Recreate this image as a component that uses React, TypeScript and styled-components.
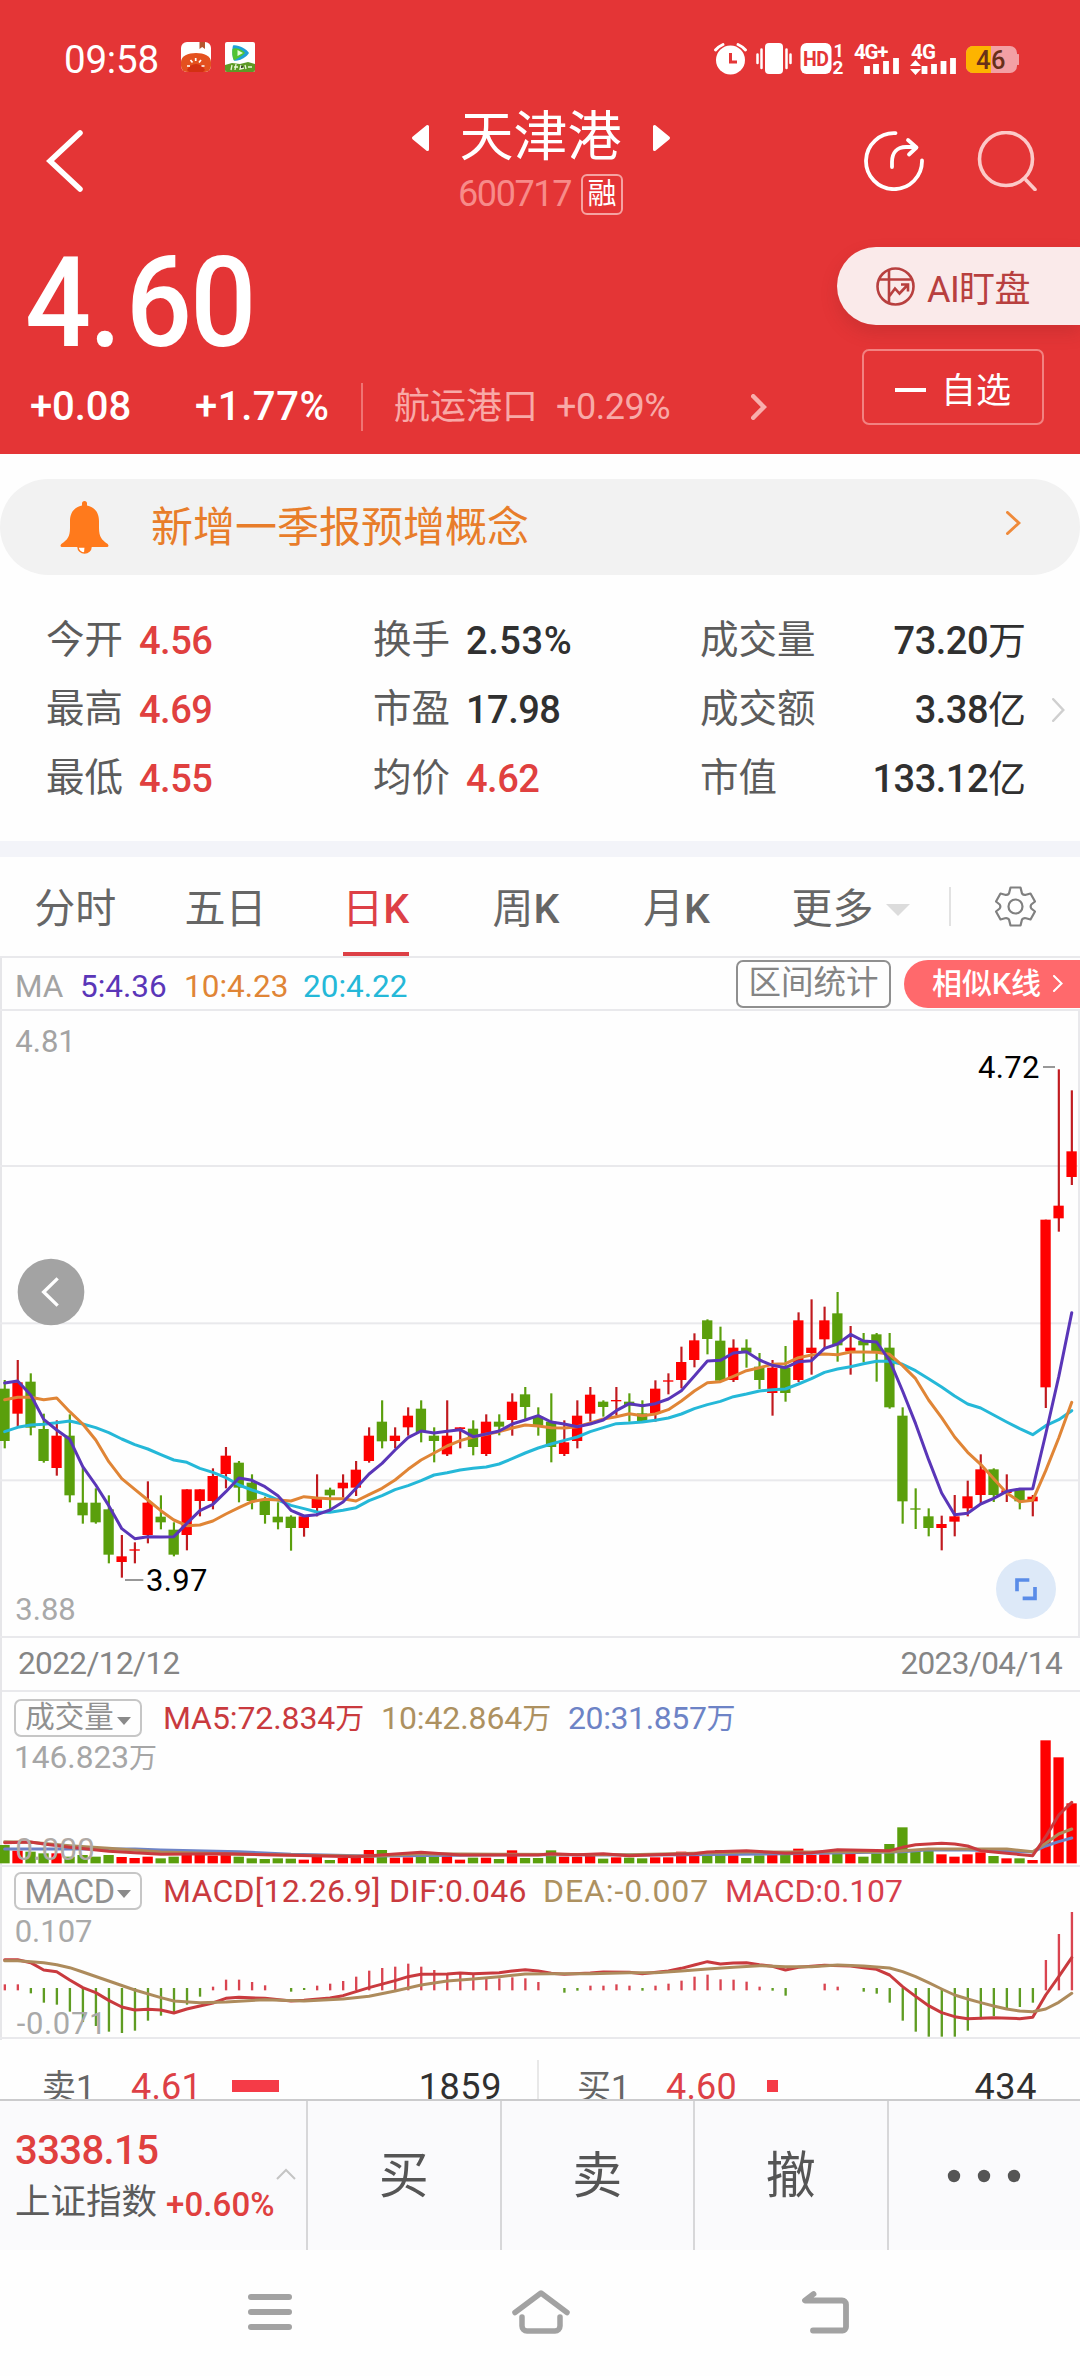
import React from "react";
import styled, { createGlobalStyle, css } from "styled-components";

const RED = "#e43536";
const UP = "#e0403f";
const K_RED = "#fe0000";
const K_GREEN = "#5a9f0c";
const PURPLE = "#5a36b8";
const ORANGE = "#e08536";
const CYAN = "#25b8d8";
const LINE = "#e9e9ec";

const Global = createGlobalStyle`
  * { box-sizing: border-box; }
  body {
    margin: 0;
    background: #fff;
    font-family: Roboto, "Noto Sans CJK SC", sans-serif;
    line-height: 1;
  }
  svg { display: block; flex: none; }
`;

const Screen = styled.div`
  width: 1080px;
  height: 2376px;
  display: flex;
  flex-direction: column;
  overflow: hidden;
  background: #fefefe;
  white-space: nowrap;
`;

/* ---------- header ---------- */

const Header = styled.header`
  height: 454px;
  background: ${RED};
  color: #fff;
`;

const StatusBar = styled.div`
  height: 90px;
  padding: 30px 61px 0 64px;
  display: flex;
  align-items: center;
`;

const Clock = styled.span`
  width: 117px;
  font-size: 38.5px;
  letter-spacing: -0.2px;
`;

const AppIcons = styled.div`
  display: flex;
  gap: 14px;
  margin-top: -6px;
`;

const SystemIcons = styled.div`
  margin-left: auto;
  margin-top: -4px;
`;

const NavBar = styled.div`
  height: 142px;
  padding: 0 43px 0 46px;
  display: grid;
  grid-template-columns: 1fr auto 1fr;
  align-items: center;
`;

const TitleBlock = styled.div`
  padding-top: 3px;
  display: flex;
  flex-direction: column;
  align-items: center;
  gap: 9px;
  margin-right: 2px;
`;

const TitleRow = styled.div`
  height: 54px;
  display: flex;
  align-items: center;
  gap: 30px;
`;

const Title = styled.h1`
  margin: 0;
  font-size: 54px;
  line-height: 60px;
  font-weight: 400;
`;

const CodeRow = styled.div`
  height: 41px;
  display: flex;
  align-items: center;
  gap: 10px;
  font-size: 36px;
  letter-spacing: -1.4px;
  color: #f78b89;
`;

const Badge = styled.span`
  width: 42px;
  height: 41px;
  display: grid;
  place-items: center;
  border: 2px solid #f5a3a2;
  border-radius: 6px;
  font-size: 29px;
  letter-spacing: 0;
  color: #fff;
`;

const NavActions = styled.div`
  display: flex;
  justify-content: flex-end;
  gap: 53px;
`;

const Quote = styled.div`
  height: 222px;
  display: flex;
  justify-content: space-between;
`;

const QuoteMain = styled.div`
  padding: 18px 0 0 25px;
`;

const Price = styled.div`
  height: 104px;
  line-height: 106px;
  font-size: 127px;
  font-weight: 500;
  letter-spacing: -2px;
  transform: scaleX(0.915);
  transform-origin: left center;
  i { font-style: normal; letter-spacing: 5px; }
`;

const ChangeRow = styled.div`
  margin-top: 23px;
  height: 60px;
  padding-left: 5px;
  display: flex;
  align-items: center;
`;

const Change = styled.span<{ $width: number; $spacing: number }>`
  width: ${(p) => p.$width}px;
  font-size: 40px;
  font-weight: 500;
  letter-spacing: ${(p) => p.$spacing}px;
`;

const Sector = styled.div`
  height: 48px;
  padding-left: 31px;
  width: 406px;
  display: flex;
  align-items: center;
  border-left: 2px solid #f07473;
  color: #f8a9a7;
  font-size: 36px;
  svg { margin-left: auto; }
`;

const SectorChange = styled.span`
  margin-left: 18px;
  letter-spacing: -0.5px;
`;

const QuoteSide = styled.div`
  padding-top: 15px;
  display: flex;
  flex-direction: column;
  align-items: flex-end;
  gap: 24px;
`;

const AiPill = styled.button`
  width: 243px;
  height: 78px;
  padding: 0 0 0 39px;
  display: flex;
  align-items: center;
  gap: 12px;
  border: 0;
  border-radius: 39px 0 0 39px;
  background: #faeaea;
  box-shadow: 0 8px 16px rgba(150, 40, 40, 0.28);
  font: 36px Roboto, "Noto Sans CJK SC", sans-serif;
  letter-spacing: -0.6px;
  color: #b8403f;
`;

const WatchButton = styled.button`
  width: 182px;
  height: 76px;
  margin-right: 36px;
  padding: 0;
  display: flex;
  align-items: center;
  justify-content: center;
  gap: 15px;
  border: 2px solid #f28281;
  border-radius: 7px;
  background: transparent;
  font: 35px Roboto, "Noto Sans CJK SC", sans-serif;
  color: #fff;
`;

const Dash = styled.span`
  width: 31px;
  height: 4px;
  margin-top: 5px;
  background: #fff;
`;

/* ---------- notice + stats ---------- */

const Notice = styled.div`
  height: 96px;
  margin-top: 25px;
  padding: 0 59px 0 60px;
  display: flex;
  align-items: center;
  border-radius: 48px;
  background: #f2f2f2;
  color: #e87d2a;
  font-size: 42px;
  > svg:last-child { margin-top: -8px; }
`;

const NoticeText = styled.span`
  margin: 2px auto 0 42px;
`;

const StatsArea = styled.div`
  height: 266px;
  padding: 31px 15px 0 46px;
  display: flex;
  align-items: flex-start;
`;

const Stats = styled.div`
  display: grid;
  grid-template-columns: 327px 327px 326px;
  grid-auto-rows: 69px;
`;

const Stat = styled.div<{ $spread?: boolean }>`
  display: flex;
  align-items: center;
  font-size: 38.5px;
  gap: 16px;
  ${(p) => p.$spread && css`justify-content: space-between;`}
`;

const StatLabel = styled.span`
  color: #5c5c5c;
`;

const StatValue = styled.span<{ $up?: boolean; $spacing: number }>`
  color: ${(p) => (p.$up ? UP : "#303030")};
  font-weight: 500;
  font-size: 38px;
  letter-spacing: ${(p) => p.$spacing}px;
  em { font-style: normal; font-weight: 400; letter-spacing: 0; }
`;

const StatsArrow = styled.div`
  height: 207px;
  margin-left: 26px;
  display: flex;
  align-items: center;
`;

const Band = styled.div`
  height: 16px;
  background: #f3f4f9;
`;

/* ---------- tabs ---------- */

const Tabs = styled.nav`
  height: 101px;
  display: flex;
  align-items: stretch;
  border-bottom: 2px solid ${LINE};
  color: #666;
  font-size: 41px;
`;

const Tab = styled.div<{ $active?: boolean }>`
  width: 150.3px;
  padding-top: 6px;
  display: flex;
  align-items: center;
  justify-content: center;
  color: ${(p) => (p.$active ? "#dd4046" : "inherit")};
  background: ${(p) =>
    p.$active ? "linear-gradient(#dd4046, #dd4046) center bottom / 66px 4px no-repeat" : "none"};
  b { font-weight: 500; }
`;

const MoreTab = styled.div`
  padding: 6px 0 0 40px;
  width: 198px;
  display: flex;
  align-items: center;
  gap: 13px;
`;

const TabTools = styled.div`
  flex: 1;
  margin: 30px 0;
  padding-left: 44px;
  display: flex;
  align-items: center;
  border-left: 2px solid #e2e2e2;
`;

/* ---------- charts ---------- */

const Framed = styled.section`
  border-left: 2px solid #e6e6e9;
  svg { margin-left: -2px; }
`;

const MaBar = styled.div`
  height: 51px;
  padding-left: 13px;
  display: flex;
  align-items: center;
  font-size: 31.5px;
  background: #fefefe;
`;

const MaValue = styled.span<{ $color: string; $width: number }>`
  width: ${(p) => p.$width}px;
  padding-top: 6px;
  color: ${(p) => p.$color};
`;

const RangeButton = styled.span`
  width: 155px;
  height: 48px;
  margin-left: auto;
  display: grid;
  place-items: center;
  border: 2px solid #8f8f8f;
  border-radius: 7px;
  font-size: 32.5px;
  color: #848484;
`;

const SimilarButton = styled.span`
  width: 176px;
  height: 48px;
  margin-left: 13px;
  padding-left: 28px;
  display: flex;
  align-items: center;
  gap: 12px;
  border-radius: 24px 0 0 24px;
  background: #ff696c;
  font-size: 30px;
  font-weight: 500;
  color: #fff;
  svg { margin-left: 0; }
`;

const DateRow = styled.div`
  height: 54px;
  padding: 0 18px 0 16px;
  display: flex;
  align-items: center;
  justify-content: space-between;
  border-bottom: 2px solid ${LINE};
  font-size: 31.5px;
  letter-spacing: -0.6px;
  color: #858585;
`;

const IndicatorHead = styled.div<{ $height: number }>`
  height: ${(p) => p.$height}px;
  padding: 0 0 1px 12px;
  display: flex;
  align-items: flex-end;
`;

const IndicatorPicker = styled.span`
  width: 128px;
  height: 38px;
  margin-right: 21px;
  display: flex;
  align-items: center;
  justify-content: center;
  gap: 3px;
  border: 2px solid #c6c6c6;
  border-radius: 7px;
  font-size: 29.5px;
  color: #919191;
  svg { margin: 5px 0 0; }
`;

const PickerLatin = styled.span`
  font-size: 32.5px;
  letter-spacing: -0.6px;
  padding-top: 2px;
`;

const IndicatorValue = styled.span<{ $color: string; $width: number; $spacing?: number }>`
  width: ${(p) => p.$width}px;
  height: 37px;
  line-height: 37px;
  font-size: 32px;
  letter-spacing: ${(p) => p.$spacing ?? -0.1}px;
  color: ${(p) => p.$color};
  em { font-style: normal; font-size: 29px; }
`;

/* ---------- order book, action bar, system nav ---------- */

const OrderBook = styled.div`
  height: 59px;
  overflow: hidden;
  display: flex;
`;

const OrderSide = styled.div<{ $pad: string; $divided?: boolean }>`
  flex: 1;
  height: 59px;
  padding: ${(p) => p.$pad};
  display: flex;
  align-items: flex-start;
  font-size: 36px;
  line-height: 40px;
  ${(p) =>
    p.$divided && css`background: linear-gradient(#e8e8e8, #e8e8e8) right 20px / 2px 39px no-repeat;`}
`;

const OrderName = styled.span`
  width: 89px;
  font-size: 34px;
  color: #666;
`;

const OrderPrice = styled.span`
  width: 101px;
  letter-spacing: 0.2px;
  color: #dd4046;
`;

const OrderBar = styled.span<{ $width: number }>`
  width: ${(p) => p.$width}px;
  height: 12px;
  margin-top: 13px;
  background: #f53b47;
`;

const OrderCount = styled.span`
  margin-left: auto;
  letter-spacing: 0.6px;
  color: #303030;
`;

const ActionBar = styled.div`
  height: 151px;
  display: grid;
  grid-template-columns: 306px repeat(4, 193.5px);
  border-top: 2px solid #cbcbcd;
  background: #fafafc;
`;

const IndexCell = styled.div`
  padding: 30px 9px 0 15px;
  position: relative;
`;

const IndexPrice = styled.div`
  height: 40px;
  line-height: 40px;
  font-size: 40px;
  font-weight: 500;
  letter-spacing: -0.6px;
  color: ${UP};
`;

const IndexRow = styled.div`
  margin-top: 12px;
  height: 40px;
  display: flex;
  align-items: center;
  gap: 9px;
  font-size: 35.5px;
  color: #5c5c5c;
`;

const IndexChange = styled.span`
  margin-top: 2px;
  font-size: 33px;
  font-weight: 500;
  letter-spacing: 0.1px;
  color: ${UP};
`;

const IndexCaret = styled.div`
  position: absolute;
  right: 10px;
  top: 67px;
`;

const Action = styled.div`
  display: flex;
  align-items: center;
  justify-content: center;
  border-left: 2px solid #d7d7d9;
  font-size: 50px;
  line-height: 60px;
  padding-top: 1px;
  color: #555;
`;

const SystemNav = styled.div`
  height: 126px;
  padding: 0 230px 2px 247px;
  display: flex;
  align-items: center;
  justify-content: space-between;
`;

/* ---------- chart data ---------- */

type Candle = [dir: 0 | 1, high: number, top: number, bottom: number, low: number];

const candles: Candle[] = [
  [0, 420, 446, 603, 625], [1, 360, 427, 521, 560], [0, 400, 425, 563, 586], [0, 521, 567, 663, 668],
  [1, 541, 587, 684, 707], [0, 523, 587, 766, 787], [0, 682, 788, 826, 851], [0, 745, 788, 847, 851],
  [0, 766, 808, 944, 970], [1, 885, 949, 966, 1013], [1, 907, 928, 932, 970], [1, 724, 788, 885, 910],
  [0, 766, 830, 847, 868], [0, 847, 869, 944, 949], [1, 748, 748, 885, 931], [1, 748, 748, 783, 829],
  [1, 685, 708, 783, 808], [1, 621, 647, 702, 745], [0, 663, 668, 743, 787], [0, 703, 728, 783, 808],
  [0, 770, 780, 825, 851], [0, 787, 830, 847, 868], [0, 826, 830, 864, 932], [1, 829, 829, 864, 890],
  [1, 703, 775, 804, 829], [0, 743, 749, 766, 808], [1, 703, 728, 745, 773], [1, 663, 689, 743, 768],
  [1, 562, 587, 663, 668], [0, 481, 545, 604, 625], [1, 562, 587, 603, 625], [1, 502, 527, 562, 587],
  [0, 481, 506, 576, 607], [0, 562, 587, 603, 667], [1, 481, 587, 643, 648], [1, 562, 562, 567, 625],
  [0, 541, 566, 621, 646], [1, 523, 545, 642, 648], [0, 523, 545, 560, 586], [1, 460, 485, 540, 587],
  [0, 441, 463, 501, 540], [0, 502, 530, 556, 587], [0, 460, 545, 621, 667], [1, 541, 607, 642, 648],
  [1, 481, 527, 603, 625], [1, 441, 464, 521, 545], [0, 481, 485, 501, 530], [1, 441, 480, 484, 527],
  [0, 460, 485, 497, 545], [0, 481, 520, 545, 549], [1, 421, 446, 521, 545], [1, 400, 421, 425, 463],
  [1, 320, 366, 420, 445], [1, 280, 301, 360, 382], [0, 238, 241, 297, 343], [0, 260, 302, 422, 424],
  [1, 298, 323, 420, 426], [0, 298, 323, 338, 383], [0, 339, 380, 420, 447], [1, 360, 383, 459, 527],
  [0, 318, 383, 459, 485], [1, 217, 241, 420, 426], [1, 178, 323, 339, 404], [1, 200, 241, 298, 325],
  [0, 156, 220, 316, 365], [1, 258, 323, 334, 404], [0, 279, 302, 316, 367], [0, 279, 283, 337, 425],
  [0, 279, 323, 502, 506], [0, 502, 527, 784, 851], [0, 745, 805, 809, 867], [0, 805, 829, 864, 889],
  [1, 827, 852, 864, 931], [1, 765, 829, 845, 889], [1, 722, 769, 805, 829], [1, 643, 688, 765, 792],
  [0, 685, 688, 765, 786], [1, 703, 751, 759, 786], [0, 745, 749, 784, 808], [1, 765, 770, 784, 829],
  [1, -61, -61, 442, 504], [1, -512, -103, -65, -25], [1, -449, -266, -189, -165],
];

const ma5 = [
  429, 423, 465, 538, 570, 598, 680, 735, 797, 866, 896, 890, 891, 890, 850, 812, 793, 755, 714, 721, 740, 767, 811,
  828, 824, 810, 786, 745, 702, 670, 630, 593, 573, 579, 574, 569, 590, 582, 573, 552, 540, 527, 546, 552, 560, 552,
  540, 512, 491, 497, 491, 477, 452, 408, 363, 361, 339, 335, 360, 376, 383, 365, 362, 325, 312, 283, 303, 306, 361,
  453, 551, 659, 759, 824, 820, 792, 775, 754, 747, 746, 582, 410, 218,
];

const ma10 = [
  479, 472, 472, 479, 474, 515, 552, 600, 665, 716, 748, 780, 812, 840, 857, 855, 843, 822, 803, 785, 778, 780, 783,
  770, 774, 776, 776, 783, 764, 745, 720, 688, 660, 639, 618, 602, 591, 583, 575, 564, 555, 558, 563, 564, 560, 549,
  537, 530, 521, 527, 522, 509, 483, 453, 428, 425, 409, 392, 383, 373, 371, 353, 345, 342, 344, 336, 336, 337, 343,
  377, 416, 480, 533, 591, 637, 673, 716, 759, 785, 781, 692, 594, 487,
];

const ma20 = [
  575, 562, 555, 553, 548, 543, 552, 563, 578, 597, 614, 627, 644, 660, 667, 685, 697, 713, 735, 750, 763, 780, 796,
  806, 816, 817, 811, 803, 782, 767, 749, 737, 722, 705, 698, 690, 685, 681, 672, 656, 639, 624, 612, 601, 591, 575,
  563, 551, 549, 546, 541, 534, 522, 506, 494, 484, 470, 462, 453, 449, 447, 432, 416, 397, 387, 380, 371, 364, 364,
  373, 392, 416, 441, 468, 492, 504, 525, 546, 566, 584, 557, 539, 512,
];

const volumeTops = [
  615, 632, 635, 640, 640, 650, 645, 650, 645, 651, 654, 650, 655, 650, 645, 645, 647, 645, 650, 655, 657, 655, 656,
  659, 647, 660, 654, 654, 630, 630, 653, 652, 648, 650, 648, 659, 653, 653, 657, 631, 654, 654, 631, 650, 650, 648,
  656, 652, 653, 655, 652, 652, 635, 648, 648, 630, 645, 654, 646, 645, 643, 626, 645, 643, 630, 640, 650, 640, 612,
  562, 628, 630, 643, 650, 643, 637, 648, 655, 655, 660, 301, 352, 490,
];

type Knots = [number, number][];

const volMa5: Knots = [
  [0, 608], [2, 606], [3, 612], [5, 622], [8, 634], [12, 643], [17, 641], [22, 646], [27, 650], [30, 642], [32, 637],
  [35, 645], [41, 645], [42, 641], [44, 644], [46, 641], [48, 647], [50, 644], [53, 641], [54, 636], [57, 632],
  [60, 640], [62, 638], [64, 629], [68, 632], [69, 622], [70, 614], [72, 610], [73, 612], [74, 618], [75, 632],
  [77, 640], [79, 647], [80, 590], [81, 525], [82, 487],
];
const volMa10: Knots = [
  [0, 605], [2, 607], [5, 617], [8, 625], [12, 636], [18, 643], [23, 646], [28, 649], [32, 641], [38, 643], [48, 644],
  [57, 636], [68, 635], [71, 627], [77, 627], [79, 635], [80, 610], [81, 582], [82, 567],
];
const volMa20: Knots = [
  [0, 627], [10, 627], [12, 630], [18, 635], [22, 643], [28, 648], [40, 644], [50, 645], [60, 641], [69, 635],
  [71, 629], [74, 630], [79, 636], [80, 618], [81, 605], [82, 594],
];

const macdTips = [
  1033, 1033, 1060, 1088, 1094, 1115, 1146, 1158, 1175, 1179, 1172, 1142, 1127, 1120, 1094, 1070, 1040, 1019, 1019,
  1026, 1036, 0, 1055, 1050, 1037, 1031, 1023, 1010, 992, 984, 980, 971, 980, 990, 1000, 998, 1005, 1015, 1015, 1012,
  1015, 1026, 0, 1058, 1052, 1037, 1037, 1033, 1037, 1052, 1037, 1031, 1022, 1010, 1004, 1018, 1019, 1025, 1040, 1052,
  1067, 0, 0, 1031, 1040, 0, 1055, 1061, 1088, 1142, 1175, 1190, 1190, 1190, 1172, 1138, 1128, 1110, 1101, 1088, 960,
  882, 816,
];

const dif: Knots = [
  [0, 959], [1, 959], [2, 968], [3, 990], [4, 995], [5, 1020], [6, 1043], [7, 1058], [8, 1081], [9, 1101], [10, 1110],
  [11, 1108], [12, 1110], [13, 1119], [14, 1107], [15, 1098], [16, 1089], [17, 1075], [18, 1072], [20, 1075],
  [22, 1083], [23, 1081], [25, 1074], [26, 1067], [27, 1055], [28, 1043], [30, 1022], [31, 1010], [32, 1003],
  [34, 1002], [35, 999], [36, 1001], [38, 998], [39, 993], [40, 989], [41, 993], [42, 1000], [43, 1003], [45, 999],
  [46, 996], [48, 997], [49, 1001], [51, 993], [52, 985], [53, 975], [54, 965], [55, 972], [56, 969], [57, 968],
  [58, 974], [59, 979], [60, 990], [61, 982], [63, 976], [65, 978], [66, 983], [67, 988], [68, 1005], [69, 1040],
  [70, 1069], [71, 1097], [72, 1118], [73, 1130], [74, 1136], [76, 1133], [78, 1136], [79, 1132], [80, 1065],
  [81, 1010], [82, 953],
];
const dea: Knots = [
  [0, 962], [1, 962], [3, 968], [4, 974], [5, 983], [6, 996], [8, 1023], [10, 1050], [12, 1073], [13, 1083],
  [15, 1088], [17, 1086], [20, 1079], [23, 1083], [26, 1077], [28, 1069], [30, 1053], [32, 1035], [34, 1023],
  [36, 1017], [38, 1010], [40, 1002], [42, 1001], [45, 1001], [48, 998], [50, 998], [52, 993], [54, 987], [56, 982],
  [58, 977], [60, 980], [62, 980], [64, 975], [66, 978], [68, 984], [69, 995], [70, 1010], [71, 1028], [72, 1047],
  [73, 1065], [74, 1077], [75, 1088], [76, 1098], [77, 1107], [78, 1113], [79, 1115], [80, 1107], [81, 1087],
  [82, 1060],
];

const xAt = (i: number) => 14 + 39.04 * i;
const series = (values: number[]) => values.map((v, i) => `${xAt(i)},${v}`).join(" ");
const knots = (values: Knots) => values.map(([i, v]) => `${xAt(i)},${v}`).join(" ");

const Curve = ({ points, color, width = 9 }: { points: string; color: string; width?: number }) => (
  <polyline points={points} fill="none" stroke={color} strokeWidth={width} strokeLinejoin="round" strokeLinecap="round" />
);

function PriceChart() {
  return (
    <svg width="1080" height="629" viewBox="0 -693 3240 1887" fontFamily="Roboto" fontSize="93">
      {[-690, -222, 250, 721, 1191].map((y) => (
        <rect key={y} x="0" y={y - 3} width="3240" height="6" fill={LINE} />
      ))}
      <rect x="3234" y="-693" width="6" height="1887" fill={LINE} />
      <text x="46" y="-564" fill="#a3a3a3">4.81</text>
      <text x="46" y="1139" fill="#a9a9a9">3.88</text>
      {candles.map(([dir, high, top, bottom, low], i) => (
        <g key={i} fill={dir ? K_RED : K_GREEN}>
          <rect x={xAt(i) - 3} y={high} width="6.500" height={low - high} fill={dir ? "#c01a1f" : K_GREEN} />
          <rect x={xAt(i) - 16} y={top} width="31" height={bottom - top} />
        </g>
      ))}
      <Curve points={series(ma20)} color={CYAN} />
      <Curve points={series(ma10)} color={ORANGE} />
      <Curve points={series(ma5)} color={PURPLE} />
      <rect x="375" y="1018" width="55" height="4" fill="#666" />
      <text x="438" y="1053" fill="#000" letterSpacing="1">3.97</text>
      <text x="2934" y="-485" fill="#000" letterSpacing="1">4.72</text>
      <rect x="3129" y="-521" width="36" height="4" fill="#666" />
      <circle cx="153" cy="156" r="100" fill="#a3a3a3" />
      <path d="M173 115L131 156L173 197" fill="none" stroke="#fff" strokeWidth="10" />
      <circle cx="3078" cy="1047" r="90" fill="#dde9f8" />
      <path d="M3051 1054V1020H3088M3105 1041V1075H3068" fill="none" stroke="#5a8ce8" strokeWidth="11" />
    </svg>
  );
}

function VolumeChart() {
  return (
    <svg width="1080" height="129" viewBox="0 294 3240 387" fontFamily='Roboto, "Noto Sans CJK SC"' fontSize="95">
      <rect x="0" y="675" width="3240" height="6" fill={LINE} />
      {volumeTops.map((top, i) => (
        <rect key={i} x={xAt(i) - 16} y={top} width="31" height={670 - top} fill={candles[i][0] ? K_RED : K_GREEN} />
      ))}
      <Curve points={knots(volMa20)} color="#6d83c6" />
      <Curve points={knots(volMa10)} color="#ad8b5c" />
      <Curve points={knots(volMa5)} color="#c93a3e" />
      <text x="42" y="384" fill="#a6a6a6">146.823<tspan fontSize="84">万</tspan></text>
      <text x="46" y="661" fill="#b0aaa6">0.000</text>
    </svg>
  );
}

function MacdChart() {
  return (
    <svg width="1080" height="129" viewBox="0 813 3240 387" fontFamily="Roboto" fontSize="93">
      <rect x="0" y="1191" width="3240" height="6" fill={LINE} />
      {macdTips.map((tip, i) => {
        if (!tip) return null;
        const up = tip < 1045;
        return (
          <rect
            key={i}
            x={xAt(i) - 3}
            y={up ? tip : 1044}
            width="7"
            height={up ? 1051 - tip : tip - 1044}
            fill={up ? "#d94450" : "#5f9c22"}
          />
        );
      })}
      <Curve points={knots(dif)} color="#c93a3e" />
      <Curve points={knots(dea)} color="#ad8b5c" />
      <text x="44" y="905" fill="#a9a9a9">0.107</text>
      <text x="50" y="1182" fill="#a9a9a9" letterSpacing="2">-0.071</text>
    </svg>
  );
}

/* ---------- icons ---------- */

const TomatoIcon = () => (
  <svg width="30" height="30" viewBox="0 0 30 30">
    <rect width="30" height="30" rx="6" fill="#fff" />
    <path d="M0 20C0 14 7 11 15 11S30 14 30 20V24A6 6 0 0 1 24 30H6A6 6 0 0 1 0 24Z" fill="#e4511f" />
    <path d="M6 28C10 20 20 20 24 28L22 30H8Z" fill="#d33012" />
    <path d="M18.5 0H24V7L21.2 5L18.5 7Z" fill="#b5552e" />
    <path d="M14.7 16V19M9.5 18L11.5 20.5M20 18L18 20.5M6 24L9 24M20.500 24H23.500" stroke="#fff" strokeWidth="1.7" />
  </svg>
);

const VideoIcon = () => (
  <svg width="30" height="30" viewBox="0 0 30 30">
    <rect width="30" height="30" rx="2" fill="#fff" />
    <path d="M8 3.500C12 2 22 7 24 11C22 15 13 20 9 18.500C7 15 7 7 8 3.500Z" fill="#1f9fd8" />
    <path d="M7.500 7C11 5 18 8 20 11C17 14 12 17 9 18.500C7 15 7 10 7.500 7Z" fill="#51c332" />
    <path d="M12.500 8L18 11L12.500 14Z" fill="#e8ffd8" />
    <path d="M0 23L7 21L15 22L23 20L30 22V28A2 2 0 0 1 28 30H2A2 2 0 0 1 0 28Z" fill="#5d9a25" />
    <path d="M7 23L6 28M11 22L10 28M9 25H13M16 23L15 27L19 26M20 23L21 27M23 25H27" stroke="#eaf6d6" strokeWidth="1.300" />
  </svg>
);

const StatusIcons = () => (
  <svg width="306" height="60" viewBox="713 28 306 60" fill="#fff" fontFamily="Roboto" fontWeight="700">
    <circle cx="730.500" cy="60" r="14.500" />
    <path d="M715.500 50A22 22 0 0 1 723 44.500M738 44.500A22 22 0 0 1 745.500 50" fill="none" stroke="#fff" strokeWidth="3" strokeLinecap="round" />
    <path d="M730.500 53V62H737" fill="none" stroke={RED} strokeWidth="3" />
    <rect x="765" y="43" width="18" height="31" rx="4" />
    <path d="M761.500 49.500V68M757.500 54.500V63M786.500 49.500V68M790.500 54.500V63" stroke="#fff" strokeWidth="2.500" strokeLinecap="round" />
    <rect x="800.500" y="43" width="31" height="31" rx="6" />
    <text x="803" y="66" fontSize="19.500" letterSpacing="-0.500" fill={RED}>HD</text>
    <text x="833.500" y="57" fontSize="18">1</text>
    <text x="832.500" y="74" fontSize="19">2</text>
    <text x="854" y="58.500" fontSize="20.500" letterSpacing="-1.200">4G+</text>
    <path d="M867 74V66M876 74V64M886 74V61M896 74V58" stroke="#fff" strokeWidth="5.800" strokeLinecap="butt" />
    <text x="911" y="58.500" fontSize="20.500" letterSpacing="-0.800">4G</text>
    <path d="M910 66L915.500 60L921 66ZM910 69L915.500 75L921 69Z" />
    <path d="M924.500 74V66M934 74V64M943.500 74V61M953 74V58" stroke="#fff" strokeWidth="5.800" />
    <rect x="966" y="46" width="51" height="27" rx="7" fill="#f3a0a4" />
    <path d="M991 46H973A7 7 0 0 0 966 53V66A7 7 0 0 0 973 73H991Z" fill="#fdb400" />
    <rect x="1016" y="54" width="3.500" height="11" rx="1.500" fill="#f3a0a4" />
    <text x="976" y="69" fontSize="25.500" fontWeight="500" fill="#683019" letterSpacing="0.600">46</text>
  </svg>
);

const ChevronRight = ({ w, h, color, stroke }: { w: number; h: number; color: string; stroke: number }) => (
  <svg width={w} height={h} viewBox={`0 0 ${w} ${h}`}>
    <path
      d={`M${stroke / 2} ${stroke / 2}L${w - stroke * 0.7} ${h / 2}L${stroke / 2} ${h - stroke / 2}`}
      fill="none" stroke={color} strokeWidth={stroke} strokeLinecap="round"
    />
  </svg>
);

const BackIcon = () => (
  <svg width="37" height="62" viewBox="0 0 37 62">
    <path d="M34 3L4 31L34 59" fill="none" stroke="#fff" strokeWidth="5.500" strokeLinecap="round" />
  </svg>
);

const Pointer = ({ flip }: { flip?: boolean }) => (
  <svg width="19" height="28" viewBox="0 0 19 28">
    <path
      d="M16.500 2.500V25.500L2.500 14Z" fill="#fff" stroke="#fff" strokeWidth="3" strokeLinejoin="round"
      transform={flip ? "matrix(-1 0 0 1 19 0)" : undefined}
    />
  </svg>
);

const ShareIcon = () => (
  <svg width="60" height="60" viewBox="0 0 60 60" fill="none" stroke="#fff" strokeWidth="3.800" strokeLinecap="round" strokeLinejoin="round">
    <path d="M31.500 2.200A28 28 0 1 0 58 29.500" />
    <path d="M28 36V31C28 22 33 16 42 16H52M44 9L52.500 16.500L45 23.500" />
  </svg>
);

const SearchIcon = () => (
  <svg width="60" height="60" viewBox="0 0 60 60" fill="none" stroke="#fcc9c8" strokeWidth="3.600" strokeLinecap="round">
    <circle cx="29" cy="28" r="26.500" />
    <path d="M49 49L58 58.500" />
  </svg>
);

const AiIcon = () => (
  <svg width="39" height="39" viewBox="0 0 39 39" fill="none" stroke="#b8403f" strokeWidth="2.600">
    <circle cx="19.500" cy="19.500" r="18" />
    <path d="M13 2.500V36.500M2 12.500H37M13.500 29L19 21.500L23.500 26.500L31.500 18M25 17.500H32V24.500" />
  </svg>
);

const BellIcon = () => (
  <svg width="49" height="53" viewBox="0 0 49 53">
    <path d="M22 2.500A2.500 2.500 0 0 1 27 2.500V4.500C35 6 39 12 39 20V27C39 36 42 39 47 42.500C49.500 44.500 48.500 46 46.500 46H2.500C.5 46 -.5 44.500 2 42.500C7 39 10 36 10 27V20C10 12 14 6 22 4.500Z" fill="#ff7a1c" />
    <path d="M18 46A6.500 6 0 0 0 31 46Z" fill="#fff" stroke="#ff7a1c" strokeWidth="1.500" />
    <path d="M24.500 46H31A6.500 6 0 0 1 24 52Z" fill="#ff7a1c" />
  </svg>
);

const GearIcon = () => (
  <svg width="41" height="41" viewBox="0 0 41 41" fill="none" stroke="#808080" strokeWidth="2.200" strokeLinejoin="round">
    <path d="M15.500 1.500H25.500L27 7.500Q28.500 9.400 31 8.800L35.500 7.500L40 15.500L36.300 18.500Q35 20.500 36.300 22.500L40 25.500L35.500 33.500L31 32.200Q28.500 31.600 27 33.500L25.500 39.500H15.500L14 33.500Q12.500 31.600 10 32.200L5.500 33.500L1 25.500L4.700 22.500Q6 20.500 4.700 18.500L1 15.500L5.500 7.500L10 8.800Q12.500 9.400 14 7.500Z" />
    <circle cx="20.500" cy="20.500" r="7" />
  </svg>
);

const Down = ({ w, h, color }: { w: number; h: number; color: string }) => (
  <svg width={w} height={h} viewBox="0 0 24 12" preserveAspectRatio="none">
    <path d="M0 0H24L12 12Z" fill={color} />
  </svg>
);

const MenuIcon = () => (
  <svg width="46" height="38" viewBox="0 0 46 38" stroke="#a2a2a2" strokeWidth="6" strokeLinecap="round">
    <path d="M4 4H42M4 19H42M4 34H42" />
  </svg>
);

const HomeIcon = () => (
  <svg width="72" height="46" viewBox="0 0 72 46" fill="none" stroke="#a2a2a2" strokeWidth="5.500" strokeLinecap="round" strokeLinejoin="round">
    <path d="M4 23.500L30 4L56 23.500" />
    <path d="M11 28V37A5 5 0 0 0 16 42H44A5 5 0 0 0 49 37V28" />
  </svg>
);

const ReturnIcon = () => (
  <svg width="50" height="44" viewBox="0 0 50 44" fill="none" stroke="#a2a2a2" strokeWidth="5.800" strokeLinecap="round" strokeLinejoin="round">
    <path d="M13.500 4L5 10.500H42A4 4 0 0 1 46 14.500V37A3.500 3.500 0 0 1 42.500 40.500H13" />
  </svg>
);

/* ---------- page ---------- */

const stats: { label: string; value: string; unit?: string; up?: boolean; spacing?: number }[] = [
  { label: "今开", value: "4.56", up: true },
  { label: "换手", value: "2.53%", spacing: 0.6 },
  { label: "成交量", value: "73.20", unit: "万" },
  { label: "最高", value: "4.69", up: true },
  { label: "市盈", value: "17.98" },
  { label: "成交额", value: "3.38", unit: "亿" },
  { label: "最低", value: "4.55", up: true },
  { label: "均价", value: "4.62", up: true },
  { label: "市值", value: "133.12", unit: "亿" },
];

export default function App() {
  return (
    <Screen>
      <Global />
      <Header>
        <StatusBar>
          <Clock>09:58</Clock>
          <AppIcons><TomatoIcon /><VideoIcon /></AppIcons>
          <SystemIcons><StatusIcons /></SystemIcons>
        </StatusBar>
        <NavBar>
          <BackIcon />
          <TitleBlock>
            <TitleRow><Pointer /><Title>天津港</Title><Pointer flip /></TitleRow>
            <CodeRow>600717<Badge>融</Badge></CodeRow>
          </TitleBlock>
          <NavActions><ShareIcon /><SearchIcon /></NavActions>
        </NavBar>
        <Quote>
          <QuoteMain>
            <Price>4<i>.</i>60</Price>
            <ChangeRow>
              <Change $width={165} $spacing={-0.1}>+0.08</Change>
              <Change $width={166} $spacing={0.6}>+1.77%</Change>
              <Sector>
                航运港口<SectorChange>+0.29%</SectorChange>
                <ChevronRight w={16} h={26} color="#f8aeac" stroke={4.5} />
              </Sector>
            </ChangeRow>
          </QuoteMain>
          <QuoteSide>
            <AiPill><AiIcon />AI盯盘</AiPill>
            <WatchButton><Dash />自选</WatchButton>
          </QuoteSide>
        </Quote>
      </Header>

      <Notice>
        <BellIcon />
        <NoticeText>新增一季报预增概念</NoticeText>
        <ChevronRight w={15} h={24} color="#ef8a3a" stroke={3} />
      </Notice>

      <StatsArea>
        <Stats>
          {stats.map((s) => (
            <Stat key={s.label} $spread={!!s.unit}>
              <StatLabel>{s.label}</StatLabel>
              <StatValue $up={s.up} $spacing={s.spacing ?? -0.5}>{s.value}{s.unit && <em>{s.unit}</em>}</StatValue>
            </Stat>
          ))}
        </Stats>
        <StatsArrow><ChevronRight w={13} h={24} color="#cfcfcf" stroke={2.5} /></StatsArrow>
      </StatsArea>
      <Band />

      <Tabs>
        <Tab>分时</Tab>
        <Tab>五日</Tab>
        <Tab $active>日<b>K</b></Tab>
        <Tab>周<b>K</b></Tab>
        <Tab>月<b>K</b></Tab>
        <MoreTab>更多<Down w={24} h={12} color="#dcdcdc" /></MoreTab>
        <TabTools><GearIcon /></TabTools>
      </Tabs>

      <Framed>
        <MaBar>
          <MaValue $color="#a3a3a3" $width={65}>MA</MaValue>
          <MaValue $color={PURPLE} $width={104}>5:4.36</MaValue>
          <MaValue $color={ORANGE} $width={119}>10:4.23</MaValue>
          <MaValue $color={CYAN} $width={120}>20:4.22</MaValue>
          <RangeButton>区间统计</RangeButton>
          <SimilarButton>相似K线<ChevronRight w={10} h={17} color="#fff" stroke={2} /></SimilarButton>
        </MaBar>
        <PriceChart />
        <DateRow><span>2022/12/12</span><span>2023/04/14</span></DateRow>
        <IndicatorHead $height={46}>
          <IndicatorPicker>成交量<Down w={14} h={8} color="#8a8a8a" /></IndicatorPicker>
          <IndicatorValue $color="#c93a3e" $width={218}>MA5:72.834<em>万</em></IndicatorValue>
          <IndicatorValue $color="#ad9160" $width={187}>10:42.864<em>万</em></IndicatorValue>
          <IndicatorValue $color="#6d83c6" $width={180} $spacing={-0.4}>20:31.857<em>万</em></IndicatorValue>
        </IndicatorHead>
        <VolumeChart />
        <IndicatorHead $height={44}>
          <IndicatorPicker><PickerLatin>MACD</PickerLatin><Down w={14} h={8} color="#8a8a8a" /></IndicatorPicker>
          <IndicatorValue $color="#c93a3e" $width={380} $spacing={0.25}>MACD[12.26.9] DIF:0.046</IndicatorValue>
          <IndicatorValue $color="#ad9160" $width={182} $spacing={0.9}>DEA:-0.007</IndicatorValue>
          <IndicatorValue $color="#d63e4c" $width={180}>MACD:0.107</IndicatorValue>
        </IndicatorHead>
        <MacdChart />
      </Framed>

      <OrderBook>
        <OrderSide $pad="27px 37px 0 42px" $divided>
          <OrderName>卖1</OrderName>
          <OrderPrice>4.61</OrderPrice>
          <OrderBar $width={47} />
          <OrderCount>1859</OrderCount>
        </OrderSide>
        <OrderSide $pad="27px 43px 0 38px">
          <OrderName>买1</OrderName>
          <OrderPrice>4.60</OrderPrice>
          <OrderBar $width={11} />
          <OrderCount>434</OrderCount>
        </OrderSide>
      </OrderBook>

      <ActionBar>
        <IndexCell>
          <IndexPrice>3338.15</IndexPrice>
          <IndexRow>上证指数<IndexChange>+0.60%</IndexChange></IndexRow>
          <IndexCaret>
            <svg width="20" height="12" viewBox="0 0 20 12"><path d="M1 11L10 2L19 11" fill="none" stroke="#c4c4c4" strokeWidth="2" /></svg>
          </IndexCaret>
        </IndexCell>
        <Action>买</Action>
        <Action>卖</Action>
        <Action>撤</Action>
        <Action>
          <svg width="74" height="14" viewBox="0 0 74 14" fill="#555">
            <circle cx="7" cy="7" r="6.200" /><circle cx="37" cy="7" r="6.200" /><circle cx="67" cy="7" r="6.200" />
          </svg>
        </Action>
      </ActionBar>

      <SystemNav><MenuIcon /><HomeIcon /><ReturnIcon /></SystemNav>
    </Screen>
  );
}
